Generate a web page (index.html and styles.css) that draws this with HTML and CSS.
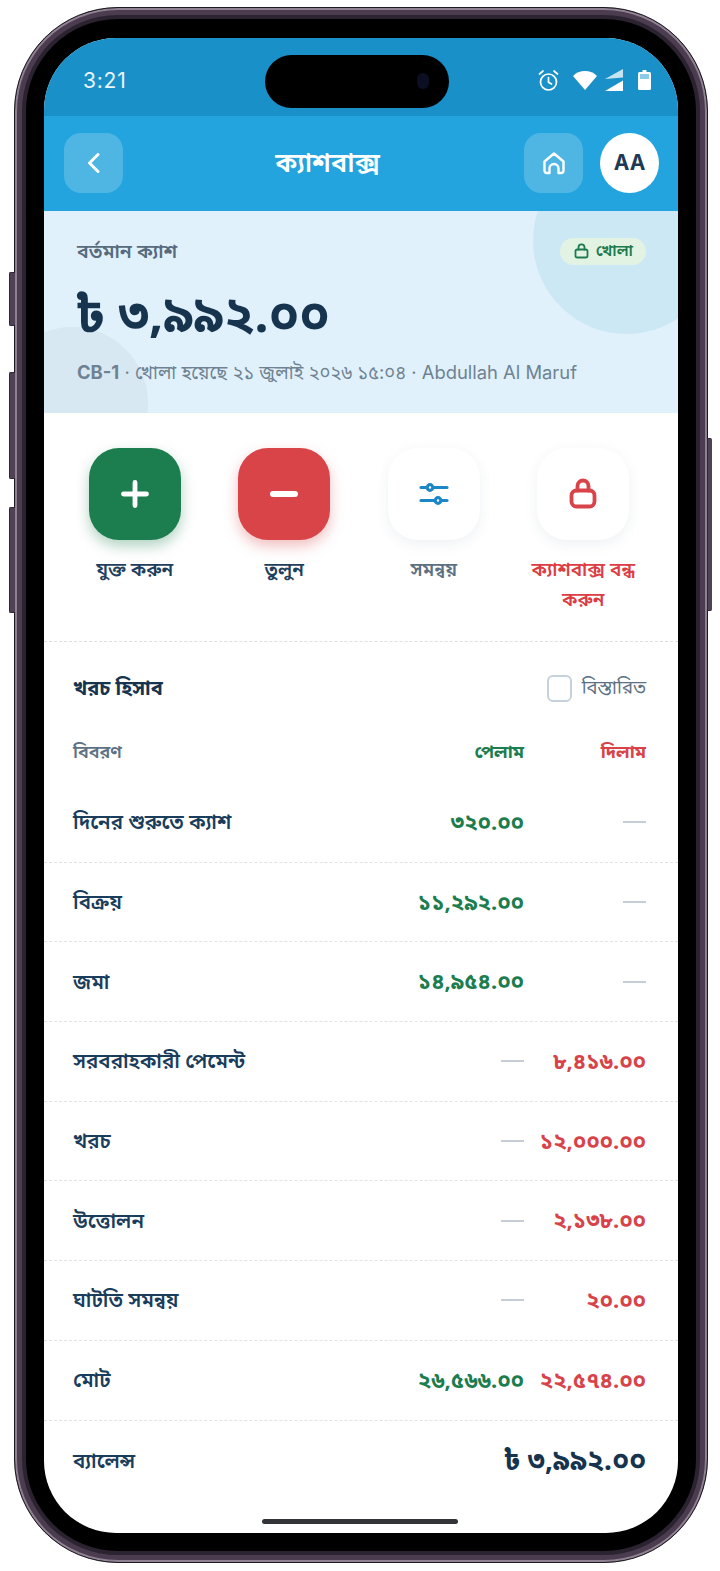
FILE: index.html
```html
<!DOCTYPE html>
<html lang="bn">
<head>
  <meta charset="UTF-8" />
  <title>ক্যাশবাক্স</title>
  <link rel="stylesheet" href="styles.css">
</head>
<body>

<div class="phone">
  <span class="side-btn side-mute"></span>
  <span class="side-btn side-up"></span>
  <span class="side-btn side-down"></span>
  <span class="side-btn side-power"></span>

  <div class="bezel">
    <div class="screen">
      <div class="island"><span class="camera"></span></div>

      <div class="statusbar">
        <span class="time">3:21</span>
        <div class="status-icons">
          <svg class="ic-alarm" width="21" height="23" viewBox="0 0 21 23" fill="none" stroke="#fff" stroke-width="1.7" stroke-linecap="round"><circle cx="10.5" cy="13" r="8"/><path d="M10.5 8.500v4.800l3 1.800M1.500 5 5 2M19.500 5 16 2"/></svg>
          <svg class="ic-wifi" width="24" height="20" viewBox="0 0 24 20"><path d="M0 6C3.200 2.800 7.300 1 12 1s8.800 1.800 12 5L12 20z" fill="#fff"/></svg>
          <svg class="ic-signal" width="18" height="22" viewBox="0 0 18 22"><path d="M18 0v8.500L0 10z" fill="#fff" opacity=".75"/><path d="M18 11.500V22H0z" fill="#fff"/></svg>
          <svg class="ic-battery" width="13" height="20" viewBox="0 0 13 20"><path d="M4.500 0h4v2h3a1.500 1.500 0 0 1 1.500 1.500v15a1.500 1.500 0 0 1-1.500 1.500h-10A1.500 1.500 0 0 1 0 18.500v-15A1.500 1.500 0 0 1 1.500 2h3z" fill="#fff"/><rect x="2" y="4" width="9" height="5" fill="#8ccbe8"/></svg>
        </div>
      </div>

      <header class="appbar">
        <button class="glass-btn">
          <svg width="22" height="24" viewBox="0 0 22 24" fill="none" stroke="#fff" stroke-width="3" stroke-linecap="round" stroke-linejoin="round"><path d="M15 3.500 6.500 12l8.500 8.500"/></svg>
        </button>
        <h1>ক্যাশবাক্স</h1>
        <div class="appbar-right">
          <button class="glass-btn">
            <svg width="26" height="26" viewBox="0 0 26 26" fill="none" stroke="#fff" stroke-width="2.4" stroke-linecap="round" stroke-linejoin="round"><path d="M3.500 11.500 13 3.500l9.500 8v9a2.500 2.500 0 0 1-2.500 2.500h-2.500v-4.500a4.500 4.500 0 0 0-9 0V23H6a2.500 2.500 0 0 1-2.500-2.500z"/></svg>
          </button>
          <div class="avatar">AA</div>
        </div>
      </header>

      <section class="hero">
        <span class="blob blob-right"></span>
        <span class="blob blob-left"></span>
        <div class="hero-top">
          <span class="hero-label">বর্তমান ক্যাশ</span>
          <span class="badge">
            <svg width="15" height="16" viewBox="0 0 15 16" fill="none" stroke="#1d7a4e" stroke-width="1.8" stroke-linecap="round" stroke-linejoin="round"><rect x="1.500" y="6.500" width="12" height="8" rx="1.800"/><path d="M4.500 6.500V4.300a3 3 0 0 1 6 0v2.200"/></svg>
            খোলা
          </span>
        </div>
        <div class="hero-amount">৳ ৩,৯৯২.০০</div>
        <div class="hero-meta"><b>CB-1</b> · খোলা হয়েছে ২১ জুলাই ২০২৬ ১৫:০৪ · Abdullah Al Maruf</div>
      </section>

      <section class="actions">
        <div class="action">
          <div class="tile tile-green">
            <svg width="34" height="34" viewBox="0 0 34 34" fill="none" stroke="#fff" stroke-width="4.8" stroke-linecap="round"><path d="M17 5.500v23M5.500 17h23"/></svg>
          </div>
          <span class="action-label">যুক্ত করুন</span>
        </div>
        <div class="action">
          <div class="tile tile-red">
            <svg width="34" height="34" viewBox="0 0 34 34" fill="none" stroke="#fff" stroke-width="6" stroke-linecap="round"><path d="M6 17h22"/></svg>
          </div>
          <span class="action-label">তুলুন</span>
        </div>
        <div class="action">
          <div class="tile">
            <svg width="32" height="32" viewBox="0 0 32 32" fill="none" stroke="#1b87c6" stroke-width="3.2" stroke-linecap="round"><path d="M3 9.500h26M3 22.500h26"/><circle cx="12" cy="9.500" r="2.800" fill="#fff"/><circle cx="20" cy="22.500" r="2.800" fill="#fff"/></svg>
          </div>
          <span class="action-label label-muted">সমন্বয়</span>
        </div>
        <div class="action">
          <div class="tile">
            <svg width="32" height="32" viewBox="0 0 32 32" fill="none" stroke="#d9434a" stroke-width="3.8" stroke-linecap="round" stroke-linejoin="round"><rect x="4.500" y="12.500" width="23" height="16" rx="5"/><path d="M10.500 12.500V8a5.500 5.500 0 0 1 11 0v4.500"/></svg>
          </div>
          <span class="action-label label-red">ক্যাশবাক্স বন্ধ করুন</span>
        </div>
      </section>

      <section class="ledger">
        <div class="ledger-head">
          <h2>খরচ হিসাব</h2>
          <label class="detail-toggle"><span class="checkbox"></span>বিস্তারিত</label>
        </div>

        <div class="ledger-cols">
          <span>বিবরণ</span>
          <span class="in">পেলাম</span>
          <span class="out">দিলাম</span>
        </div>

        <div class="ledger-row">
          <span class="name">দিনের শুরুতে ক্যাশ</span>
          <span class="amt in">৩২০.০০</span>
          <span class="amt"><i class="dash"></i></span>
        </div>
        <div class="ledger-row">
          <span class="name">বিক্রয়</span>
          <span class="amt in">১১,২৯২.০০</span>
          <span class="amt"><i class="dash"></i></span>
        </div>
        <div class="ledger-row">
          <span class="name">জমা</span>
          <span class="amt in">১৪,৯৫৪.০০</span>
          <span class="amt"><i class="dash"></i></span>
        </div>
        <div class="ledger-row">
          <span class="name">সরবরাহকারী পেমেন্ট</span>
          <span class="amt"><i class="dash"></i></span>
          <span class="amt out">৮,৪১৬.০০</span>
        </div>
        <div class="ledger-row">
          <span class="name">খরচ</span>
          <span class="amt"><i class="dash"></i></span>
          <span class="amt out">১২,০০০.০০</span>
        </div>
        <div class="ledger-row">
          <span class="name">উত্তোলন</span>
          <span class="amt"><i class="dash"></i></span>
          <span class="amt out">২,১৩৮.০০</span>
        </div>
        <div class="ledger-row">
          <span class="name">ঘাটতি সমন্বয়</span>
          <span class="amt"><i class="dash"></i></span>
          <span class="amt out">২০.০০</span>
        </div>
        <div class="ledger-row">
          <span class="name">মোট</span>
          <span class="amt in">২৬,৫৬৬.০০</span>
          <span class="amt out">২২,৫৭৪.০০</span>
        </div>
        <div class="balance-row">
          <span class="name">ব্যালেন্স</span>
          <span class="balance-amt">৳ ৩,৯৯২.০০</span>
        </div>
      </section>

      <div class="home-bar"></div>
    </div>
  </div>
</div>

</body>
</html>
```

FILE: styles.css
```css
* {
  box-sizing: border-box;
}

body {
  margin: 0;
  background: #fff;
  color: #1b3a57;
  font-family: "Noto Sans", "Noto Sans Bengali", Inter, sans-serif;
  padding: 7px 12px 8px 14px;
}

/* Device frame */
.phone {
  position: relative;
  width: 694px;
  height: 1556px;
  padding: 11px;
  border-radius: 104px;
  background: #2b2330;
  border: 1px solid #1c1a20;
  box-shadow: inset 0 0 0 2px #8f8192, inset 0 0 0 7px #4b3d4f;
}

.bezel {
  height: 100%;
  padding: 19px 18px 18px;
  border-radius: 92px;
  background: #000;
}

.side-btn {
  position: absolute;
  width: 6px;
  left: -6px;
  background: #4f4254;
  border: 1px solid #2f2734;
  border-right: none;
  border-radius: 2px 0 0 2px;
}
.side-mute { top: 264px; height: 54px; }
.side-up { top: 364px; height: 107px; }
.side-down { top: 499px; height: 106px; }
.side-power { left: auto; right: -5px; width: 5px; top: 430px; height: 173px; border-radius: 0 2px 2px 0; }

.screen {
  position: relative;
  height: 100%;
  overflow: hidden;
  border-radius: 72px;
  background: #fff;
}

.island {
  position: absolute;
  top: 17px;
  left: 221px;
  width: 184px;
  height: 53px;
  border-radius: 27px;
  background: #000;
  z-index: 5;
}

.camera {
  position: absolute;
  top: 18px;
  right: 20px;
  width: 12px;
  height: 16px;
  border-radius: 6px;
  background: #0b0f24;
}

.home-bar {
  position: absolute;
  bottom: 9px;
  left: 218px;
  width: 196px;
  height: 5px;
  border-radius: 3px;
  background: #333438;
}

/* Status bar */
.statusbar {
  height: 78px;
  display: flex;
  align-items: center;
  justify-content: space-between;
  padding: 16px 27px 10px 39px;
  background: #1a90c8;
  color: #fff;
}

.time {
  font-family: Inter, sans-serif;
  font-size: 21px;
  letter-spacing: 0.8px;
  color: #e9f5fb;
}

.status-icons {
  display: flex;
  align-items: center;
}

.ic-wifi { margin-left: 14px; }
.ic-signal { margin-left: 8px; }
.ic-battery { margin-left: 15px; }

/* App bar */
.appbar {
  height: 95px;
  display: flex;
  align-items: center;
  padding: 0 19px 2px 20px;
  background: #23a4de;
}

.appbar h1 {
  flex: 1;
  margin: 0;
  padding-left: 8px;
  text-align: center;
  font-size: 27px;
  font-weight: 600;
  color: #fff;
}

.glass-btn {
  width: 59px;
  height: 60px;
  display: flex;
  align-items: center;
  justify-content: center;
  padding: 0;
  border: none;
  border-radius: 17px;
  background: rgba(255,255,255,0.2);
}

.appbar-right {
  display: flex;
  align-items: center;
  gap: 17px;
}

.avatar {
  width: 59px;
  height: 60px;
  border-radius: 50%;
  background: #fff;
  display: flex;
  align-items: center;
  justify-content: center;
  font-family: Inter, sans-serif;
  font-size: 21px;
  font-weight: 700;
  color: #1f3a56;
}

/* Hero */
.hero {
  position: relative;
  overflow: hidden;
  height: 202px;
  padding: 24px 32px 0 33px;
  background: #e1f1fb;
}

.blob {
  position: absolute;
  border-radius: 50%;
}
.blob-right {
  width: 187px;
  height: 187px;
  top: -64px;
  right: -42px;
  background: #cde8f5;
}
.blob-left {
  width: 152px;
  height: 152px;
  left: -48px;
  top: 116px;
  background: #d8e8f2;
}

.hero-top {
  position: relative;
  display: flex;
  align-items: center;
  justify-content: space-between;
  height: 32px;
}

.hero-label {
  font-size: 19.5px;
  font-weight: 600;
  color: #566b7e;
}

.badge {
  display: flex;
  align-items: center;
  gap: 7px;
  height: 27px;
  padding: 0 13px 0 14px;
  border-radius: 14px;
  background: #e2f3e4;
  font-size: 16px;
  font-weight: 600;
  color: #1d7a4e;
}

.hero-amount {
  position: relative;
  margin: 16px 0 0 -2px;
  font-size: 50px;
  line-height: 60px;
  font-weight: 700;
  color: #17344f;
}

.hero-meta {
  position: relative;
  margin-top: 17px;
  font-family: Inter, "Noto Sans", "Noto Sans Bengali", sans-serif;
  font-size: 18.4px;
  line-height: 24px;
  white-space: nowrap;
  color: #6e8292;
}

.hero-meta b {
  font-weight: 700;
}

/* Quick actions */
.actions {
  display: grid;
  grid-template-columns: repeat(4, 1fr);
  gap: 12px;
  height: 229px;
  padding: 35px 26px 0 22px;
  border-bottom: 1px dashed #dcdfe4;
}

.action {
  display: flex;
  flex-direction: column;
  align-items: center;
  text-align: center;
}

.tile {
  width: 92px;
  height: 92px;
  display: flex;
  align-items: center;
  justify-content: center;
  border-radius: 30px;
  background: #fff;
  box-shadow: 0 4px 14px rgba(30,50,80,0.07);
}

.tile-green {
  background: #1c7d4f;
  box-shadow: 0 6px 14px rgba(28,125,79,0.35);
}

.tile-red {
  background: #d84448;
  box-shadow: 0 6px 14px rgba(216,68,72,0.35);
}

.action-label {
  width: 120px;
  margin-top: 14px;
  font-size: 19px;
  line-height: 30px;
  font-weight: 600;
  color: #1f3f5e;
}

.label-muted { color: #5d7184; }
.label-red { color: #dc3d45; }

/* Ledger */
.ledger-head {
  display: flex;
  align-items: center;
  justify-content: space-between;
  height: 78px;
  padding: 14px 32px 0 29px;
}

.ledger-head h2 {
  margin: 0;
  font-size: 20px;
  font-weight: 700;
  color: #17344f;
}

.detail-toggle {
  display: flex;
  align-items: center;
  gap: 10px;
  font-size: 18.5px;
  color: #5d7184;
}

.checkbox {
  width: 25px;
  height: 27px;
  border: 2px solid #c7d1db;
  border-radius: 6px;
  background: #fff;
}

.ledger-cols,
.ledger-row {
  display: grid;
  grid-template-columns: 1fr 130px 122px;
  align-items: center;
  padding: 0 32px 0 29px;
}

.ledger-cols {
  height: 63px;
  font-size: 18px;
  font-weight: 600;
  color: #5d7184;
}

.ledger-cols .in,
.ledger-cols .out {
  text-align: right;
  font-weight: 700;
}

.ledger-row {
  height: 79.7px;
  border-bottom: 1px dashed #e0e3e8;
}

.name {
  font-size: 20.5px;
  font-weight: 600;
  color: #1a3d5c;
}

.amt {
  display: flex;
  justify-content: flex-end;
  align-items: center;
  font-size: 22px;
  font-weight: 700;
  white-space: nowrap;
}

.in { color: #1c7d4f; }
.out { color: #d8434a; }

.dash {
  width: 23px;
  height: 2px;
  background: #c6cdd6;
}

.balance-row {
  display: flex;
  align-items: center;
  justify-content: space-between;
  height: 80px;
  padding: 0 32px 0 29px;
}

.balance-amt {
  font-size: 28px;
  font-weight: 700;
  color: #17344f;
}
```
